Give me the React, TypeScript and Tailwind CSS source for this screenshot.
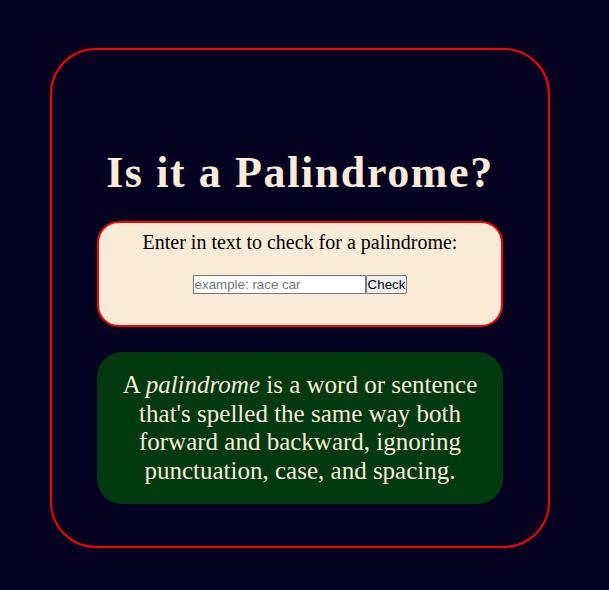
import { useState } from 'react';

function App() {
  const [text, setText] = useState('');

  return (
    <div className="min-h-screen w-full bg-[#040220] pt-[48px] pl-[50px] font-['Liberation_Serif',serif]">
      <div className="flex h-[500px] w-[500px] flex-col items-center rounded-[46px] border-2 border-[#ff0000] px-[45px] pt-[98px]">
        <h1 className="text-center text-[44px] font-bold leading-[49px] tracking-[1.6px] text-[#faebd7]">
          Is it a Palindrome?
        </h1>
        <div className="mt-[24px] flex w-[406px] flex-col items-center rounded-[22px] border-2 border-[#ff0000] bg-[#faebd7] pb-[31px] pt-[8px]">
          <label htmlFor="text-input" className="text-[20px] leading-[23px] text-black">
            Enter in text to check for a palindrome:
          </label>
          <div className="mt-[21px] flex items-stretch">
            <input
              id="text-input"
              type="text"
              value={text}
              onChange={(e) => setText(e.target.value)}
              placeholder="example: race car"
              className="h-[19px] w-[173px] border border-[#767676] bg-white px-[1px] font-['Liberation_Sans',sans-serif] text-[13.33px] text-black placeholder:text-[#757575] outline-none"
            />
            <button className="h-[19px] rounded-[2px] border border-[#767676] bg-[#efefef] px-[1px] font-['Liberation_Sans',sans-serif] text-[13.33px] leading-[15px] text-black">
              Check
            </button>
          </div>
        </div>
        <div className="mt-[25px] w-[406px] rounded-[25px] bg-[#023a10] px-[18px] py-[19px] text-center text-[25px] leading-[28.5px] text-[#faebd7]">
          A <em>palindrome</em> is a word or sentence that's spelled the same way both forward and backward, ignoring
          punctuation, case, and spacing.
        </div>
      </div>
    </div>
  );
}

export default App;
